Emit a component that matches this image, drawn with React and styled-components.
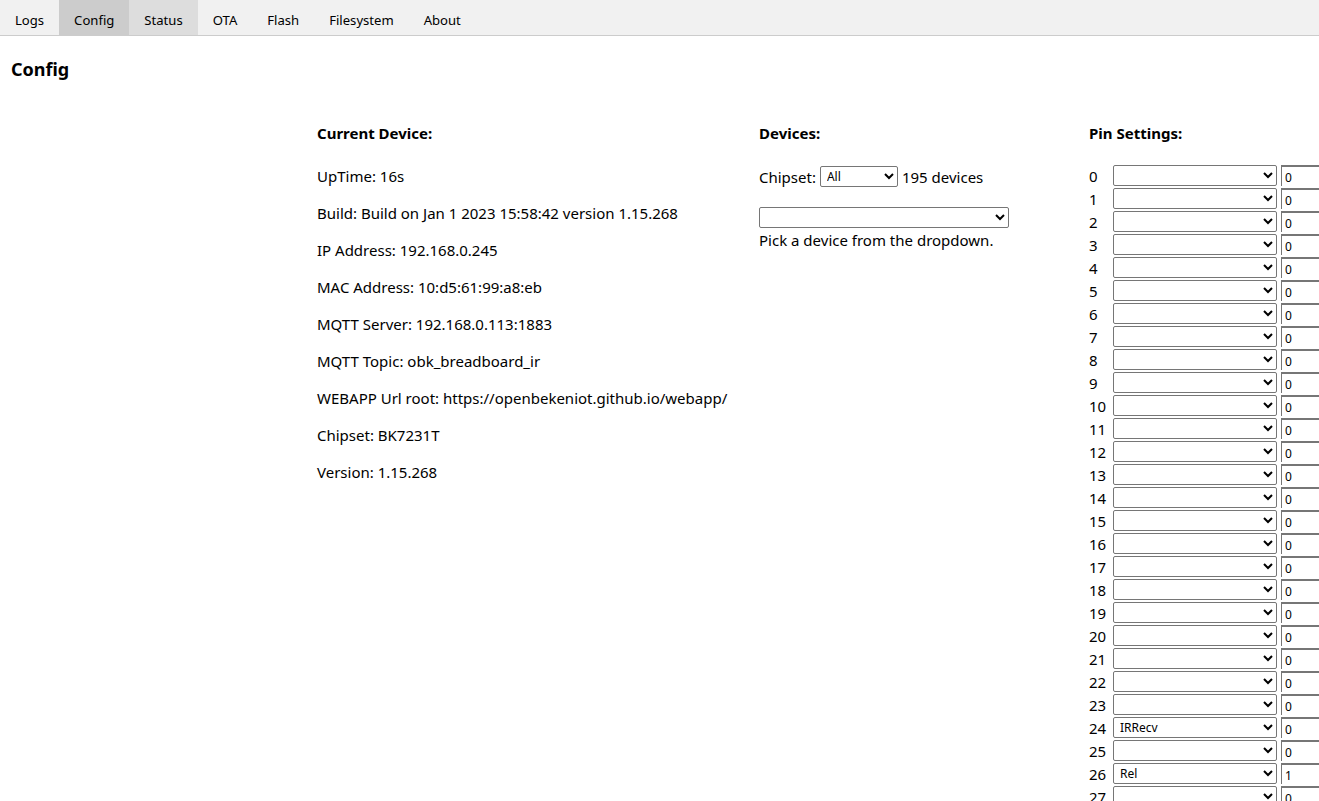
import React from 'react'
import styled, { createGlobalStyle } from 'styled-components'

const GlobalStyle = createGlobalStyle`
  body {
    margin: 0;
    font-family: "Noto Sans", "Open Sans", sans-serif;
    color: #000;
    background: #fff;
    overflow: hidden;
  }
`

const tabs = ['Logs', 'Config', 'Status', 'OTA', 'Flash', 'Filesystem', 'About']

const TabBar = styled.div`
  display: flex;
  height: 35px;
  background: #f1f1f1;
  border-bottom: 1px solid #ccc;
`

const Tab = styled.div`
  display: flex;
  align-items: center;
  padding: 5px 15px 0;
  font-size: 13.1px;
  background: ${p => (p.active ? '#ccc' : p.hover ? '#ddd' : 'transparent')};
`

const Title = styled.h1`
  margin: 21px 0 0 11px;
  font-size: 18px;
  font-weight: bold;
`

const Columns = styled.div`
  display: flex;
  padding: 42px 0 0 317px;
  font-size: 15px;
`

const Column = styled.div`
  flex: 0 0 ${p => p.width}px;
  display: flex;
  flex-direction: column;
`

const Heading = styled.div`
  font-weight: bold;
  font-size: 15px;
  line-height: 20px;
  margin-bottom: 23px;
`

const InfoList = styled.div`
  display: flex;
  flex-direction: column;
  gap: 17px;
  line-height: 20px;
`

const ChipRow = styled.div`
  display: flex;
  align-items: center;
  gap: 4px;
  line-height: 20px;
`

const Select = styled.select`
  width: ${p => p.width}px;
  height: 21px;
  font-family: inherit;
  font-size: 12px;
  border: 1px solid #767676;
  border-radius: 2px;
  background: #fff;
  padding: 0 2px;
  color: #000;
  box-sizing: border-box;
`

const DeviceBlock = styled.div`
  margin-top: 20px;
  display: flex;
  flex-direction: column;
  gap: 2px;
  line-height: 20px;
`

const PinList = styled.div`
  display: flex;
  flex-direction: column;
  gap: 2px;
  margin-top: -1px;
`

const PinRow = styled.div`
  display: flex;
  align-items: center;
  height: 21px;
`

const PinNum = styled.span`
  width: 24px;
  font-size: 15px;
`

const ChannelInput = styled.input`
  width: 60px;
  height: 21px;
  margin-left: 4px;
  font-family: inherit;
  font-size: 12px;
  box-sizing: border-box;
  border: none;
  border-top: 2px solid #767676;
  border-left: 1px solid #767676;
  padding: 2px 3px 0;
  outline: none;
`

const info = [
  'UpTime: 16s',
  'Build: Build on Jan 1 2023 15:58:42 version 1.15.268',
  'IP Address: 192.168.0.245',
  'MAC Address: 10:d5:61:99:a8:eb',
  'MQTT Server: 192.168.0.113:1883',
  'MQTT Topic: obk_breadboard_ir',
  'WEBAPP Url root: https://openbekeniot.github.io/webapp/',
  'Chipset: BK7231T',
  'Version: 1.15.268',
]

const pins = Array.from({ length: 28 }, (_, i) => ({
  n: i,
  role: i === 24 ? 'IRRecv' : i === 26 ? 'Rel' : '',
  ch: i === 26 ? '1' : '0',
}))

const App = () => (
  <>
    <GlobalStyle />
    <TabBar>
      {tabs.map(t => (
        <Tab key={t} active={t === 'Config'} hover={t === 'Status'}>
          {t}
        </Tab>
      ))}
    </TabBar>
    <Title>Config</Title>
    <Columns>
      <Column width={442}>
        <Heading>Current Device:</Heading>
        <InfoList>
          {info.map(line => (
            <div key={line}>{line}</div>
          ))}
        </InfoList>
      </Column>
      <Column width={330}>
        <Heading>Devices:</Heading>
        <ChipRow>
          Chipset:
          <Select width={78} defaultValue="All">
            <option>All</option>
          </Select>
          195 devices
        </ChipRow>
        <DeviceBlock>
          <Select width={250}>
            <option></option>
          </Select>
          Pick a device from the dropdown.
        </DeviceBlock>
      </Column>
      <Column width={240}>
        <Heading>Pin Settings:</Heading>
        <PinList>
          {pins.map(p => (
            <PinRow key={p.n}>
              <PinNum>{p.n}</PinNum>
              <Select width={164} defaultValue={p.role}>
                <option value="">{''}</option>
                {p.role && <option value={p.role}>{p.role}</option>}
              </Select>
              <ChannelInput defaultValue={p.ch} />
            </PinRow>
          ))}
        </PinList>
      </Column>
    </Columns>
  </>
)

export default App
